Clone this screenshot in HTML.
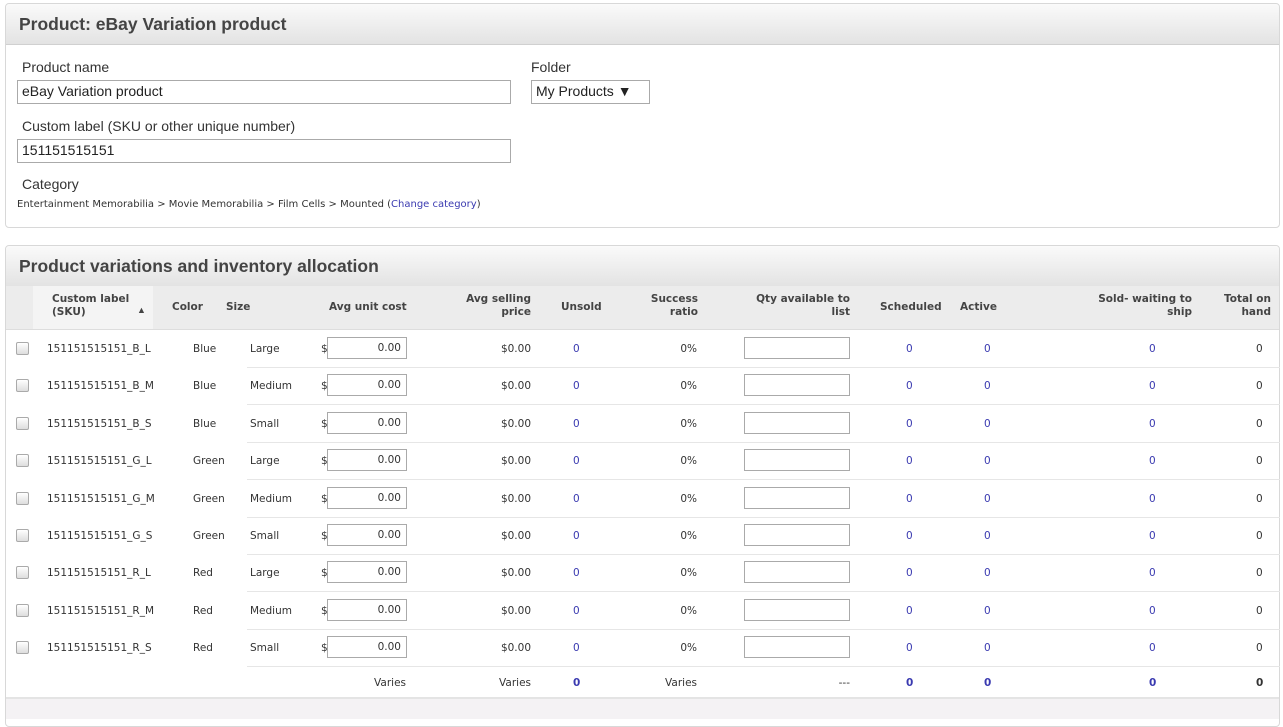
<!DOCTYPE html>
<html><head><style>
body{margin:0;width:1283px;height:716px;background:#fff;font-family:"Liberation Sans",sans-serif;position:relative;overflow:hidden;color:#333}
.p{position:absolute;left:5px;right:3px;border:1px solid #d8d8d8;border-radius:4px;background:#fff}
.h{height:40px;background:linear-gradient(#fafafa,#e3e3e3);border-bottom:1px solid #d0d0d0;font-weight:bold;font-size:17.5px;color:#444;line-height:40px;padding-left:13px;border-radius:4px 4px 0 0}
.a{position:absolute;white-space:nowrap}
.l{font-size:14px;color:#333}
.in{position:absolute;border:1px solid #aaa;background:#fff;box-sizing:border-box;font-size:14px;padding:2px 4px;color:#222}
.t{font-family:"DejaVu Sans",Verdana,sans-serif;font-size:10.5px;color:#333}
.th{font-family:"DejaVu Sans",Verdana,sans-serif;font-size:10.5px;font-weight:bold;color:#444;line-height:13px}
.b{color:#3a3ab0}
.cb{position:absolute;left:16px;width:11px;height:11px;border:1px solid #aaa;border-radius:2px;background:linear-gradient(#fff,#ddd)}
.sep{position:absolute;left:247px;right:3px;height:1px;background:#e6e6e6}
.ci{position:absolute;left:327px;width:80px;height:22px;border:1px solid #aaa;box-sizing:border-box;text-align:right;padding-right:5px;line-height:20px;background:#fff}
.qi{position:absolute;left:744px;width:106px;height:22px;border:1px solid #aaa;box-sizing:border-box;background:#fff}
</style></head><body>
<div class="p" style="top:3px;height:223px">
<div class="h">Product: eBay Variation product</div>
</div>
<div class="a l" style="left:22px;top:59px">Product name</div>
<div class="in" style="left:17px;top:80px;width:494px;height:24px">eBay Variation product</div>
<div class="a l" style="left:531px;top:59px">Folder</div>
<div class="in" style="left:531px;top:80px;width:119px;height:24px">My Products &#9660;</div>
<div class="a l" style="left:22px;top:118px">Custom label (SKU or other unique number)</div>
<div class="in" style="left:17px;top:139px;width:494px;height:24px">151151515151</div>
<div class="a l" style="left:22px;top:176px">Category</div>
<div class="a t" style="left:17px;top:199px;font-size:10px">Entertainment Memorabilia &gt; Movie Memorabilia &gt; Film Cells &gt; Mounted (<span class="b">Change category</span>)</div>

<div class="p" style="top:245px;height:480px;border-radius:4px">
<div class="h">Product variations and inventory allocation</div>
</div>
<div class="a" style="left:6px;top:286px;right:4px;height:43px;background:#ececec;border-bottom:1px solid #ddd"></div>
<div class="a" style="left:33px;top:286px;width:120px;height:43px;background:#f4f4f4"></div>
<div class="a th" style="left:52px;top:293px">Custom label<br>(SKU)</div>
<div class="a" style="left:137px;top:305px;font-size:9px;color:#444">&#9650;</div>
<div class="a th" style="left:172px;top:301px">Color</div>
<div class="a th" style="left:226px;top:301px">Size</div>
<div class="a th" style="left:329px;top:301px">Avg unit cost</div>
<div class="a th" style="left:440px;top:293px;width:91px;text-align:right">Avg selling<br>price</div>
<div class="a th" style="left:561px;top:301px">Unsold</div>
<div class="a th" style="left:620px;top:293px;width:78px;text-align:right">Success<br>ratio</div>
<div class="a th" style="left:730px;top:293px;width:120px;text-align:right">Qty available to<br>list</div>
<div class="a th" style="left:880px;top:301px">Scheduled</div>
<div class="a th" style="left:960px;top:301px">Active</div>
<div class="a th" style="left:1030px;top:293px;width:162px;text-align:right">Sold- waiting to<br>ship</div>
<div class="a th" style="left:1200px;top:293px;width:71px;text-align:right">Total on<br>hand</div>

<div id="rows"></div>
<script>
var d=[["B_L","Blue","Large"],["B_M","Blue","Medium"],["B_S","Blue","Small"],["G_L","Green","Large"],["G_M","Green","Medium"],["G_S","Green","Small"],["R_L","Red","Large"],["R_M","Red","Medium"],["R_S","Red","Small"]];
var h="";
d.forEach(function(r,i){var c=348+i*37.4;var y=c-5;
h+='<div class="cb" style="top:'+(c-6)+'px"></div>';
h+='<div class="a t" style="left:47px;top:'+y+'px">151151515151_'+r[0]+'</div>';
h+='<div class="a t" style="left:193px;top:'+y+'px">'+r[1]+'</div>';
h+='<div class="a t" style="left:250px;top:'+y+'px">'+r[2]+'</div>';
h+='<div class="a t" style="left:321px;top:'+y+'px">$</div>';
h+='<div class="ci t" style="top:'+(c-11)+'px">0.00</div>';
h+='<div class="a t" style="left:470px;width:61px;text-align:right;top:'+y+'px">$0.00</div>';
h+='<div class="a t b" style="left:573px;top:'+y+'px">0</div>';
h+='<div class="a t" style="left:640px;width:57px;text-align:right;top:'+y+'px">0%</div>';
h+='<div class="qi" style="top:'+(c-11)+'px"></div>';
h+='<div class="a t b" style="left:906px;top:'+y+'px">0</div>';
h+='<div class="a t b" style="left:984px;top:'+y+'px">0</div>';
h+='<div class="a t b" style="left:1149px;top:'+y+'px">0</div>';
h+='<div class="a t" style="left:1256px;top:'+y+'px">0</div>';
h+='<div class="sep" style="top:'+(c+19)+'px"></div>';
});
var y=677;
h+='<div class="a t" style="left:340px;width:66px;text-align:right;top:'+y+'px">Varies</div>';
h+='<div class="a t" style="left:470px;width:61px;text-align:right;top:'+y+'px">Varies</div>';
h+='<div class="a t b" style="left:573px;top:'+y+'px;font-weight:bold">0</div>';
h+='<div class="a t" style="left:640px;width:57px;text-align:right;top:'+y+'px">Varies</div>';
h+='<div class="a t" style="left:800px;width:50px;text-align:right;top:'+y+'px">---</div>';
h+='<div class="a t b" style="left:906px;top:'+y+'px;font-weight:bold">0</div>';
h+='<div class="a t b" style="left:984px;top:'+y+'px;font-weight:bold">0</div>';
h+='<div class="a t b" style="left:1149px;top:'+y+'px;font-weight:bold">0</div>';
h+='<div class="a t" style="left:1256px;top:'+y+'px;font-weight:bold">0</div>';
h+='<div class="a" style="left:6px;right:4px;top:697px;height:20px;background:#f4f2f4;border-top:2px solid #e4e4e4"></div>';
document.getElementById("rows").innerHTML=h;
</script>
</body></html>
